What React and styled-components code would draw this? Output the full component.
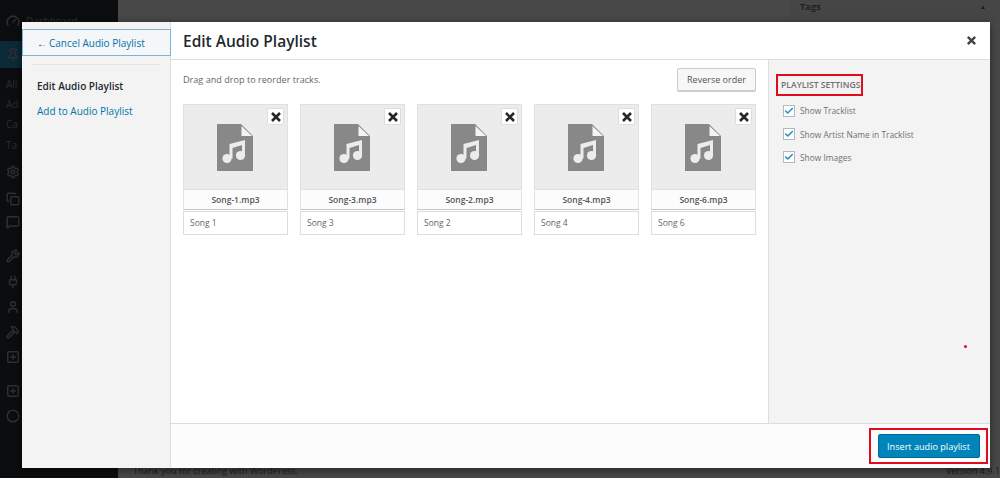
import React from "react";
import styled, { createGlobalStyle } from "styled-components";
import { Gauge, Pin, Settings, Copy, MessageSquare, Wrench, Plug, User, Hammer, SquarePlus, Circle, Check } from "lucide-react";

const Global = createGlobalStyle`
  html, body { margin: 0; padding: 0; width: 1000px; height: 478px; overflow: hidden; }
  body { font-family: "Open Sans", "Liberation Sans", sans-serif; background: #434343; }
  * { box-sizing: border-box; }
`;

const Page = styled.div`
  position: relative;
  width: 1000px;
  height: 478px;
  display: flex;
  overflow: hidden;
  background: #484848;
`;
const AdminMenu = styled.div`
  width: 118px;
  flex: none;
  background: #0b0d0f;
  display: flex;
  flex-direction: column;
  color: #2c2e31;
  font-size: 10px;
`;
const AdminItem = styled.div`
  height: ${p => p.$h || 24}px;
  margin-top: ${p => p.$gap || 0}px;
  padding-left: 6px;
  display: flex;
  align-items: center;
  gap: 6px;
  flex: none;
  background: ${p => (p.$active ? "#0a2a3a" : "transparent")};
`;
const AdminMain = styled.div`
  flex: 1;
  min-width: 0;
  display: flex;
  flex-direction: column;
  justify-content: space-between;
`;
const TopStrip = styled.div`
  display: flex;
  justify-content: flex-end;
  height: 22px;
`;
const TagsBox = styled.div`
  width: 210px;
  padding: 0 14px 0 10px;
  background: #464646;
  font-weight: 600;
  font-size: 9.5px;
  line-height: 14px;
  display: flex;
  justify-content: space-between;
  color: #1b1b1b;
`;
const Collapse = styled.span`
  font-size: 6px;
`;
const BottomStrip = styled.div`
  height: 14px;
  display: flex;
  justify-content: space-between;
  padding-left: 15px;
  line-height: 14px;
  font-size: 9px;
  color: #1c1c1c;
`;

const Modal = styled.div`
  position: absolute;
  left: 22px;
  top: 22px;
  width: 968px;
  height: 446px;
  background: #fff;
  display: flex;
  box-shadow: 0 2px 8px rgba(0, 0, 0, 0.5);
`;
const Side = styled.aside`
  width: 149px;
  flex: none;
  background: #f3f3f3;
  border-right: 1px solid #ddd;
`;
const CancelLink = styled.div`
  height: 27px;
  margin-top: 7px;
  width: 149px;
  border: 1px solid #7fb2d3;
  background: #f5f6f7;
  padding-left: 14px;
  display: flex;
  align-items: center;
  font-size: 10px;
  color: #0073aa;
`;
const Arrow = styled.span`
  color: #444;
  margin-right: 2px;
`;
const SideRule = styled.div`
  height: 1px;
  margin: 8px 10px 13px;
  background: #e6e6e6;
`;
const SideNav = styled.nav`
  padding-left: 15px;
  display: flex;
  flex-direction: column;
  gap: 9px;
`;
const SideItem = styled.div`
  font-size: 10px;
  line-height: 16px;
  font-weight: ${p => (p.$current ? 600 : 400)};
  color: ${p => (p.$current ? "#23282d" : "#0073aa")};
`;
const Content = styled.div`
  flex: 1;
  min-width: 0;
  display: flex;
  flex-direction: column;
`;
const Header = styled.header`
  height: 38px;
  flex: none;
  border-bottom: 1px solid #ddd;
  display: flex;
  align-items: center;
  justify-content: space-between;
  padding-left: 12px;
`;
const Title = styled.h1`
  margin: 0;
  font-size: 15.5px;
  font-weight: 600;
  color: #23282d;
`;
const CloseBtn = styled.button`
  width: 38px;
  height: 37px;
  border: 0;
  background: none;
  padding: 0;
  display: flex;
  align-items: center;
  justify-content: center;
`;
const Middle = styled.div`
  flex: 1;
  display: flex;
  min-height: 0;
`;
const Browser = styled.main`
  flex: 1;
  padding: 8px 12px 0;
  min-width: 0;
`;
const Toolbar = styled.div`
  display: flex;
  justify-content: space-between;
  align-items: center;
  height: 23px;
  margin-bottom: 13px;
`;
const Hint = styled.span`
  font-size: 9.1px;
  color: #666;
`;
const ReverseBtn = styled.button`
  width: 79px;
  height: 23px;
  font: inherit;
  font-size: 9px;
  color: #555;
  background: #f7f7f7;
  border: 1px solid #ccc;
  border-radius: 2px;
  box-shadow: 0 1px 0 #ccc;
  padding: 0;
`;
const Tracks = styled.div`
  display: flex;
  gap: 12px;
`;
const Track = styled.div`
  width: 105px;
`;
const Thumb = styled.div`
  position: relative;
  height: 86px;
  padding-right: 1px;
  background: #ececec;
  box-shadow: inset 0 0 0 1px rgba(0, 0, 0, 0.05);
  display: flex;
  align-items: center;
  justify-content: center;
`;
const RemoveBtn = styled.button`
  position: absolute;
  top: 4px;
  right: 4px;
  width: 17px;
  height: 17px;
  padding: 0;
  background: #fff;
  border: 1px solid #ddd;
  border-radius: 1px;
  display: flex;
  align-items: center;
  justify-content: center;
`;
const FileName = styled.div`
  height: 20px;
  background: #fcfcfc;
  border: 1px solid #e2e2e2;
  border-top: 0;
  border-bottom-color: #c8c8c8;
  font-size: 8.5px;
  font-weight: 600;
  color: #555;
  text-align: center;
  line-height: 19px;
`;
const Caption = styled.div`
  margin-top: 1px;
  height: 24px;
  border: 1px solid #ddd;
  background: #fff;
  font-size: 8.5px;
  color: #666;
  padding-left: 6px;
  line-height: 22px;
`;
const SettingsPanel = styled.section`
  width: 222px;
  flex: none;
  background: #f3f3f3;
  border-left: 1px solid #ddd;
  padding: 14px 0 0 7px;
  position: relative;
`;
const SettingsHead = styled.h2`
  margin: 0 0 3px;
  width: 87px;
  height: 22px;
  border: 2px solid #e00b1c;
  font-size: 8.6px;
  font-weight: 600;
  color: #707070;
  line-height: 18px;
  padding-left: 3px;
  white-space: nowrap;
`;
const Option = styled.label`
  display: flex;
  align-items: center;
  height: 23.4px;
  padding-left: 7px;
  font-size: 8.4px;
  color: #707070;
`;
const Box = styled.span`
  width: 12px;
  height: 12px;
  background: #fff;
  border: 1px solid #b4b9be;
  margin-right: 5px;
  display: flex;
  align-items: center;
  justify-content: center;
`;
const RedDot = styled.span`
  position: absolute;
  left: 195px;
  top: 285px;
  width: 3px;
  height: 3px;
  border-radius: 50%;
  background: #e00b1c;
`;
const Footer = styled.footer`
  height: 45px;
  flex: none;
  background: #fcfcfc;
  border-top: 1px solid #ddd;
  display: flex;
  justify-content: flex-end;
  align-items: center;
  padding-right: 2px;
`;
const Highlight = styled.div`
  width: 119px;
  height: 36px;
  border: 2px solid #e00b1c;
  display: flex;
  align-items: center;
  justify-content: center;
`;
const InsertBtn = styled.button`
  width: 102px;
  height: 24px;
  font: inherit;
  font-size: 9.1px;
  color: #fff;
  background: #0085ba;
  border: 1px solid #006799;
  border-radius: 2px;
  padding: 0;
`;

const FileIcon = () => (
  <svg width="36" height="47" viewBox="0 0 36 47" aria-hidden="true">
    <path d="M0 0H24L36 12V47H0Z" fill="#888" />
    <path d="M24.5 2V12H35Z" fill="#f4f4f4" />
    <path d="M12.5 20L28 16V31.5H25V21L15.5 24V34.5H12.5Z" fill="#ececec" />
    <circle cx="10" cy="34.5" r="4.6" fill="#ececec" />
    <circle cx="23.5" cy="31.5" r="4.6" fill="#ececec" />
  </svg>
);

const Cross = ({ size = 12, color = "#23282d" }) => (
  <svg width={size} height={size} viewBox="0 0 12 12" aria-hidden="true">
    <path d="M2 2L10 10M10 2L2 10" stroke={color} strokeWidth="2.6" />
  </svg>
);

const songs = [
  ["Song-1.mp3", "Song 1"],
  ["Song-3.mp3", "Song 3"],
  ["Song-2.mp3", "Song 2"],
  ["Song-4.mp3", "Song 4"],
  ["Song-6.mp3", "Song 6"],
];

export default function App() {
  const ic = { size: 14, strokeWidth: 2.5, color: "#2e3034" };
  return (
    <Page>
      <Global />
      <AdminMenu>
        <AdminItem $h={41}><Gauge {...ic} />Dashboard</AdminItem>
        <AdminItem $h={27} $active><Pin {...ic} /></AdminItem>
        <AdminItem $h={20} $gap={6}>All</AdminItem>
        <AdminItem $h={20}>Ad</AdminItem>
        <AdminItem $h={20}>Ca</AdminItem>
        <AdminItem $h={22}>Ta</AdminItem>
        <AdminItem $h={26} $gap={3}><Settings {...ic} /></AdminItem>
        <AdminItem $h={28}><Copy {...ic} /></AdminItem>
        <AdminItem $h={18}><MessageSquare {...ic} /></AdminItem>
        <AdminItem $h={26} $gap={12}><Wrench {...ic} /></AdminItem>
        <AdminItem $h={26}><Plug {...ic} /></AdminItem>
        <AdminItem $h={24}><User {...ic} /></AdminItem>
        <AdminItem $h={26}><Hammer {...ic} /></AdminItem>
        <AdminItem $h={24}><SquarePlus {...ic} /></AdminItem>
        <AdminItem $h={26} $gap={9}><SquarePlus {...ic} /></AdminItem>
        <AdminItem $h={24}><Circle {...ic} /></AdminItem>
      </AdminMenu>
      <AdminMain>
        <TopStrip>
          <TagsBox><span>Tags</span><Collapse>▲</Collapse></TagsBox>
        </TopStrip>
        <BottomStrip>
          <span>Thank you for creating with WordPress.</span>
          <span>Version 4.9.1</span>
        </BottomStrip>
      </AdminMain>
      <Modal>
        <Side>
          <CancelLink><Arrow>←</Arrow>Cancel Audio Playlist</CancelLink>
          <SideRule />
          <SideNav>
            <SideItem $current>Edit Audio Playlist</SideItem>
            <SideItem>Add to Audio Playlist</SideItem>
          </SideNav>
        </Side>
        <Content>
          <Header>
            <Title>Edit Audio Playlist</Title>
            <CloseBtn aria-label="Close"><Cross size={11} color="#444" /></CloseBtn>
          </Header>
          <Middle>
            <Browser>
              <Toolbar>
                <Hint>Drag and drop to reorder tracks.</Hint>
                <ReverseBtn>Reverse order</ReverseBtn>
              </Toolbar>
              <Tracks>
                {songs.map(([file, title]) => (
                  <Track key={file}>
                    <Thumb>
                      <FileIcon />
                      <RemoveBtn aria-label="Remove"><Cross size={12} /></RemoveBtn>
                    </Thumb>
                    <FileName>{file}</FileName>
                    <Caption>{title}</Caption>
                  </Track>
                ))}
              </Tracks>
            </Browser>
            <SettingsPanel>
              <SettingsHead>PLAYLIST SETTINGS</SettingsHead>
              {["Show Tracklist", "Show Artist Name in Tracklist", "Show Images"].map(t => (
                <Option key={t}>
                  <Box><Check size={10} strokeWidth={3.5} color="#1e8cbe" /></Box>
                  {t}
                </Option>
              ))}
              <RedDot />
            </SettingsPanel>
          </Middle>
          <Footer>
            <Highlight><InsertBtn>Insert audio playlist</InsertBtn></Highlight>
          </Footer>
        </Content>
      </Modal>
    </Page>
  );
}
